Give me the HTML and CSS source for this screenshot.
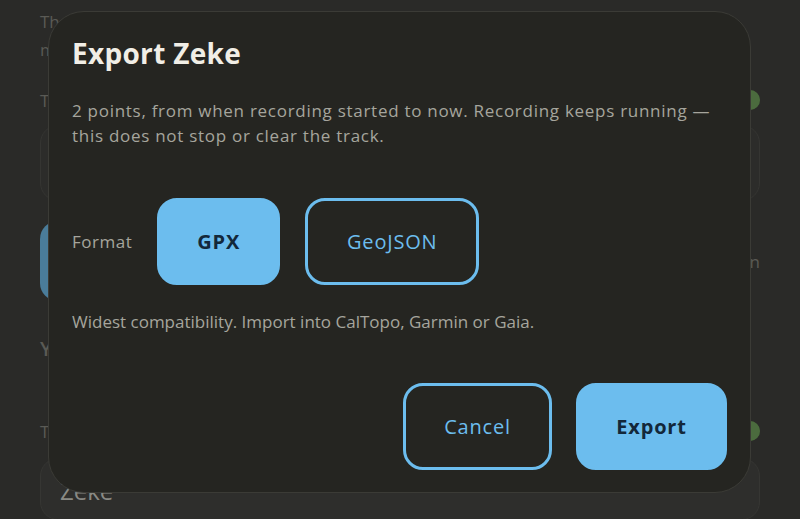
FILE: index.html
```html
<!DOCTYPE html>
<html lang="en">
<head>
<meta charset="utf-8">
<title>Export Zeke</title>
<link rel="stylesheet" href="styles.css">
</head>
<body>
<div class="page">
  <p class="intro">The track is kept on this device only. Nothing is uploaded, and<br>matching stays private until you choose to export it.</p>
  <div class="toggle-row first">
    <span>Track recording</span>
    <span class="toggle"><span class="knob"></span></span>
  </div>
  <div class="card"></div>
  <div class="btn-row">
    <span class="bg-btn">Export track</span>
    <span class="bg-link">Clear the track when done on</span>
  </div>
  <h3 class="section">Your device</h3>
  <div class="toggle-row second">
    <span>Tracker name shown to others</span>
    <span class="toggle"><span class="knob"></span></span>
  </div>
  <div class="input">Zeke</div>
</div>

<div class="modal" role="dialog" aria-labelledby="dlg-title">
  <h2 id="dlg-title" class="title">Export Zeke</h2>
  <p class="desc">2 points, from when recording started to now. Recording keeps running —<br>this does not stop or clear the track.</p>
  <div class="format-row">
    <span class="format-label">Format</span>
    <button class="btn btn-solid btn-fmt">GPX</button>
    <button class="btn btn-outline btn-fmt">GeoJSON</button>
  </div>
  <p class="hint">Widest compatibility. Import into CalTopo, Garmin or Gaia.</p>
  <div class="actions">
    <button class="btn btn-outline btn-act">Cancel</button>
    <button class="btn btn-solid btn-act">Export</button>
  </div>
</div>
</body>
</html>
```
FILE: styles.css
```css
html, body {
  margin: 0;
  height: 519px;
  overflow: hidden;
}
body {
  background: #2a2a28;
  font-family: "Open Sans", "Noto Sans", sans-serif;
  color: #5a5a55;
}
.page {
  padding: 8px 40px 0;
}
.intro {
  margin: 0;
  font-size: 17px;
  line-height: 28px;
  white-space: nowrap;
}
.toggle-row {
  display: flex;
  justify-content: space-between;
  align-items: center;
  font-size: 17px;
  height: 24px;
}
.toggle-row.first { margin-top: 24px; }
.toggle-row.second { margin-top: 58px; }
.toggle {
  width: 44px;
  height: 20px;
  border-radius: 10px;
  background: #34452c;
  display: flex;
  justify-content: flex-end;
  align-items: center;
}
.knob {
  width: 20px;
  height: 20px;
  border-radius: 50%;
  background: #4b6b3e;
}
.card {
  margin-top: 13px;
  height: 74px;
  border: 1px solid #353532;
  border-radius: 18px;
  background: #2c2c2a;
}
.btn-row {
  margin-top: 20px;
  display: flex;
  justify-content: space-between;
  align-items: center;
  height: 80px;
}
.bg-btn {
  display: flex;
  align-items: center;
  height: 80px;
  padding: 0 40px;
  border-radius: 18px;
  background: #4a7c9a;
  color: #1b2a33;
  font-size: 18px;
  font-weight: 700;
}
.bg-link {
  font-size: 17px;
  color: #5a5a55;
}
.section {
  margin: 36px 0 0;
  font-size: 20px;
  font-weight: 600;
  line-height: 24px;
}
.input {
  margin-top: 15px;
  height: 62px;
  border: 1px solid #363633;
  border-radius: 18px;
  background: #2e2e2c;
  padding: 17px 19px 0;
  box-sizing: border-box;
  font-size: 24px;
  line-height: 30px;
  color: #8a8a84;
}

/* Modal dialog overlaying the page */
.modal {
  position: absolute;
  left: 48px;
  top: 11px;
  width: 703px;
  height: 482px;
  box-sizing: border-box;
  border: 1px solid #3b3b36;
  border-radius: 36px;
  background: #252521;
  padding: 23px 23px 0;
  color: #a6a59d;
}
.title {
  margin: 0;
  font-size: 28px;
  line-height: 36px;
  font-weight: 700;
  letter-spacing: 0.3px;
  color: #f1eee6;
}
.desc {
  margin: 27px 0 0;
  font-size: 17px;
  line-height: 25px;
  letter-spacing: 0.72px;
  white-space: nowrap;
}
.format-row {
  margin-top: 50px;
  display: flex;
  align-items: center;
  gap: 25px;
}
.format-label {
  font-size: 17px;
  letter-spacing: 0.5px;
}
.btn {
  font-family: inherit;
  box-sizing: border-box;
  border: 3px solid #6cbdee;
  border-radius: 20px;
  padding: 0;
  font-size: 20px;
  letter-spacing: 0.8px;
  cursor: pointer;
}
.btn-solid {
  background: #6cbdee;
  color: #13283a;
  font-weight: 700;
}
.btn-outline {
  background: transparent;
  color: #6cbdee;
  font-weight: 400;
}
.btn-fmt {
  height: 87px;
}
.btn-fmt.btn-solid { width: 123px; }
.btn-fmt.btn-outline { width: 174px; }
.hint {
  margin: 24px 0 0;
  font-size: 17px;
  line-height: 25px;
}
.actions {
  margin-top: 49px;
  display: flex;
  justify-content: flex-end;
  gap: 24px;
}
.btn-act {
  height: 87px;
}
.btn-act.btn-outline { width: 149px; }
.btn-act.btn-solid { width: 151px; }
```
